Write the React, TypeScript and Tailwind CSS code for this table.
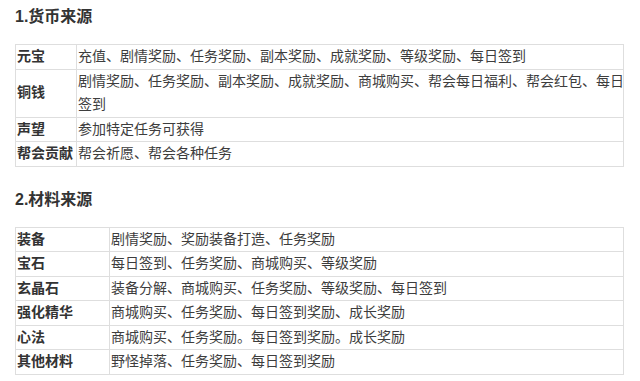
import React from "react";

const font = {
  fontFamily: '"Liberation Sans", "Noto Sans CJK SC", sans-serif',
};

type Row = { k: string; v: React.ReactNode };

const t1: Row[] = [
  { k: "元宝", v: "充值、剧情奖励、任务奖励、副本奖励、成就奖励、等级奖励、每日签到" },
  {
    k: "铜钱",
    v: (
      <>
        <span className="whitespace-nowrap">剧情奖励、任务奖励、副本奖励、成就奖励、商城购买、帮会每日福利、帮会红包、每日</span>
        <br />
        签到
      </>
    ),
  },
  { k: "声望", v: "参加特定任务可获得" },
  { k: "帮会贡献", v: "帮会祈愿、帮会各种任务" },
];

const t2: Row[] = [
  { k: "装备", v: "剧情奖励、奖励装备打造、任务奖励" },
  { k: "宝石", v: "每日签到、任务奖励、商城购买、等级奖励" },
  { k: "玄晶石", v: "装备分解、商城购买、任务奖励、等级奖励、每日签到" },
  { k: "强化精华", v: "商城购买、任务奖励、每日签到奖励、成长奖励" },
  { k: "心法", v: "商城购买、任务奖励。每日签到奖励。成长奖励" },
  { k: "其他材料", v: "野怪掉落、任务奖励、每日签到奖励" },
];

function Table({ rows, w1 }: { rows: Row[]; w1: string }) {
  return (
    <table className="w-[609px] border-collapse table-fixed text-[14px] leading-[23.5px] text-[#3d3d3d]">
      <colgroup>
        <col className={w1} />
        <col />
      </colgroup>
      <tbody>
        {rows.map((r) => (
          <tr key={r.k}>
            <td className="border border-[#dedede] pl-px pr-0 py-0 font-bold text-[#333] align-middle whitespace-nowrap">
              {r.k}
            </td>
            <td className="border border-[#dedede] pl-px pr-0 py-0 align-middle">{r.v}</td>
          </tr>
        ))}
      </tbody>
    </table>
  );
}

export default function App() {
  return (
    <div className="w-[640px] h-[381px] bg-white pl-[15px] pt-[5px] overflow-hidden" style={font}>
      <h2 className="text-[16px] leading-[24px] font-bold text-[#333] mb-[15px]">1.货币来源</h2>
      <Table rows={t1} w1="w-[61px]" />
      <h2 className="text-[16px] leading-[24px] font-bold text-[#333] mt-[21px] mb-[15px]">2.材料来源</h2>
      <Table rows={t2} w1="w-[94px]" />
    </div>
  );
}
